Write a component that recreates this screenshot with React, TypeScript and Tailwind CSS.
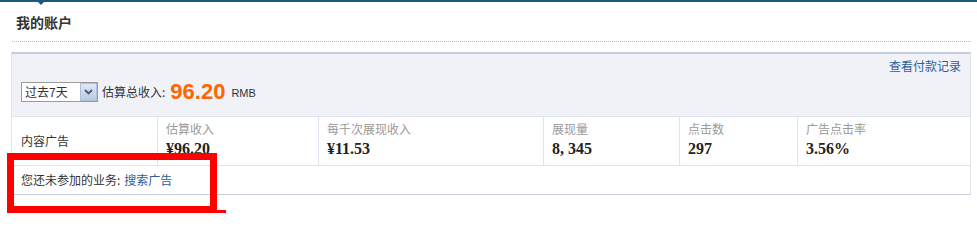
import React from "react";

const cols = [
  { label: "估算收入", value: "¥96.20", w: "w-[161px]" },
  { label: "每千次展现收入", value: "¥11.53", w: "w-[225px]" },
  { label: "展现量", value: "8, 345", w: "w-[136px]" },
  { label: "点击数", value: "297", w: "w-[118px]" },
  { label: "广告点击率", value: "3.56%", w: "flex-1" },
];

export default function App() {
  return (
    <div className="relative w-[977px] h-[213px] overflow-hidden bg-white text-[12px] text-[#333] font-['Noto_Sans_CJK_SC','Noto_Sans',sans-serif]">
      {/* top rule with marker */}
      <div className="relative h-[2px] bg-[#1b5a7c]">
        <div className="absolute left-[36px] top-0 w-0 h-0 border-l-[5px] border-r-[5px] border-t-[5px] border-l-transparent border-r-transparent border-t-[#1b5a7c]" />
      </div>

      <h1 className="pl-4 pt-[12px] text-[14px] leading-[16px] font-bold text-[#333]">我的账户</h1>

      <div className="ml-[12px] w-[959px] mt-[11px] border-t border-dotted border-[#bbb]" />

      <div className="ml-[11px] w-[960px] mt-[10px] border-t-2 border-t-[#c4cce0] border-x border-x-[#e0e4ee] border-b border-b-[#c8ccd6]">
        {/* summary */}
        <div className="h-[62px] bg-[#f0f2f8] relative">
          <div className="flex justify-end pr-[9px] pt-[5px]">
            <a className="text-[#2a5f9a] leading-[14px] cursor-pointer">查看付款记录</a>
          </div>
          <div className="flex items-center pl-[9px] mt-[9px]">
            <div className="flex w-[77px] h-[20px] border border-[#9a9a9a] bg-white">
              <span className="flex-1 pl-[3px] leading-[18px]">过去7天</span>
              <span className="w-[17px] h-[18px] flex items-center justify-center border border-[#b0c0d8] bg-gradient-to-b from-[#dfe8f4] to-[#b9cbe4]">
                <svg width="9" height="6" viewBox="0 0 9 6">
                  <path d="M1 1 L4.5 4.5 L8 1" stroke="#4a5a72" strokeWidth="1.8" fill="none" />
                </svg>
              </span>
            </div>
            <span className="ml-[4px]">估算总收入:</span>
            <span className="ml-[5px] text-[22px] font-bold text-[#ff6600] leading-[20px] font-['Liberation_Sans',sans-serif]">96.20</span>
            <span className="ml-[6px] text-[11px] mt-[3px] font-['Liberation_Sans',sans-serif]">RMB</span>
          </div>
        </div>

        {/* stats row */}
        <div className="flex h-[50px] border-t border-[#dde3ef] border-b border-b-[#dde3ef] bg-white">
          <div className="w-[146px] flex items-center pl-[9px] border-r border-[#dde3ef]">内容广告</div>
          {cols.map((c, i) => (
            <div key={c.label} className={`${c.w} pl-[8px] pt-[4px] ${i < cols.length - 1 ? "border-r border-[#dde3ef]" : ""}`}>
              <div className="text-[#999] leading-[16px]">{c.label}</div>
              <div className="mt-[3px] text-[16px] font-bold leading-[18px] text-[#222] font-['Liberation_Serif',serif]">{c.value}</div>
            </div>
          ))}
        </div>

        {/* footer */}
        <div className="h-[28px] flex items-center pl-[9px] bg-white">
          <span>您还未参加的业务:</span>
          <a className="ml-[4px] text-[#2a5f9a] cursor-pointer">搜索广告</a>
        </div>
      </div>

      {/* annotation box */}
      <div className="absolute left-[7px] top-[153px] w-[210px] h-[60px] border-[7px] border-[#ff0000]" />
      <div className="absolute left-[217px] top-[210px] w-[9px] h-[3px] bg-[#ff0000]" />
    </div>
  );
}
